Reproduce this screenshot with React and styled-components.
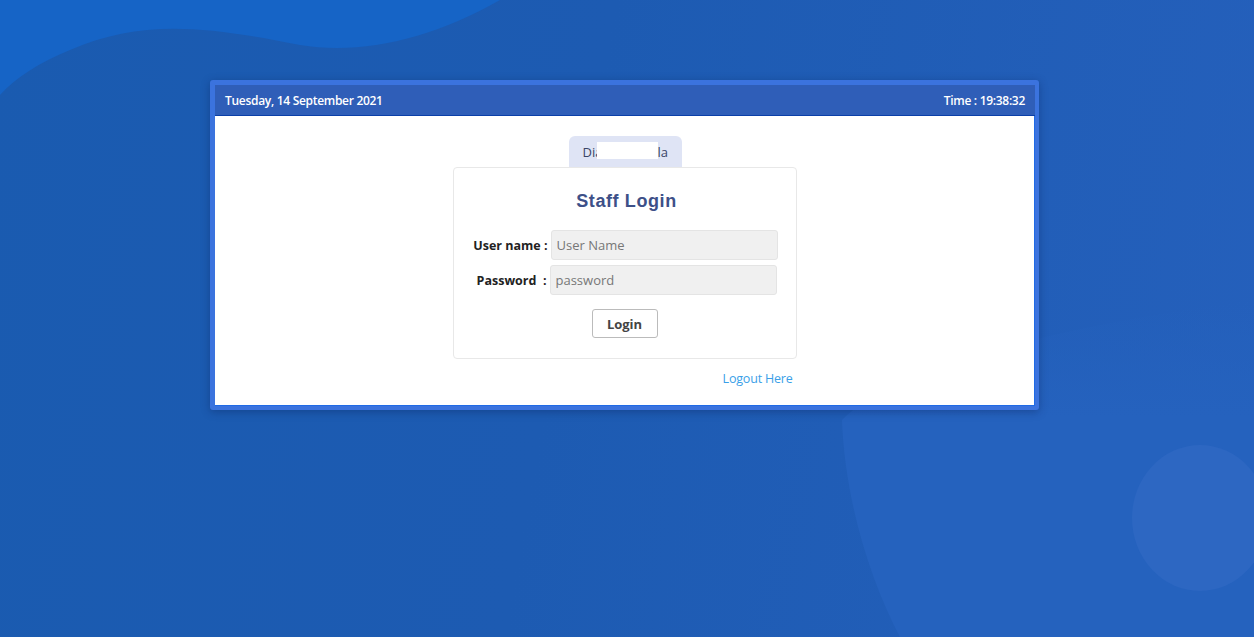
import React from 'react';
import styled, { createGlobalStyle } from 'styled-components';

const Global = createGlobalStyle`
  html, body { margin: 0; padding: 0; }
  body {
    font-family: "Open Sans", "Noto Sans", sans-serif;
    background: #1d5ab0;
  }
`;

const Page = styled.div`
  position: relative;
  width: 100%;
  height: 637px;
  overflow: hidden;
  background: linear-gradient(100deg, #1a5bb0 0%, #1d5bb2 45%, #2560bc 100%);
  padding-top: 80px;
  box-sizing: border-box;
`;

const Backdrop = styled.svg`
  position: absolute;
  inset: 0;
  width: 100%;
  height: 100%;
  pointer-events: none;
`;

const Frame = styled.div`
  position: relative;
  width: 820px;
  margin: 0 0 0 210px;
  background: #3b73de;
  padding: 5px 4px 4px 5px;
  border-radius: 3px;
  box-shadow: 0 2px 8px rgba(10, 30, 80, 0.35);
`;

const TitleBar = styled.div`
  display: flex;
  justify-content: space-between;
  align-items: center;
  height: 30px;
  padding: 0 10px;
  background: #2f5eb8;
  border-bottom: 1px solid #0b3fa8;
  color: #ffffff;
  font-size: 12px;
  font-weight: 600;
  letter-spacing: -0.3px;
`;

const Body = styled.div`
  background: #ffffff;
  height: 290px;
  display: flex;
  flex-direction: column;
  align-items: center;
  padding-top: 20px;
  box-sizing: border-box;
  border-right: 1px solid #1f6ae6;
  border-bottom: 1px solid #1f6ae6;
`;

const Tab = styled.div`
  position: relative;
  width: 113px;
  height: 31px;
  margin-left: 1px;
  background: #dfe4f5;
  border-radius: 6px 6px 0 0;
  color: #3a4466;
  font-size: 13px;
  display: flex;
  align-items: center;
  padding-left: 14px;
  box-sizing: border-box;
`;

const Mask = styled.span`
  position: absolute;
  left: 28px;
  top: 6px;
  width: 61px;
  height: 17px;
  background: #ffffff;
`;

const TabTail = styled.span`
  position: absolute;
  left: 89px;
`;

const Card = styled.div`
  width: 344px;
  height: 192px;
  border: 1px solid #e8e8e8;
  border-radius: 4px;
  box-sizing: border-box;
  display: flex;
  flex-direction: column;
  align-items: center;
  padding-top: 23px;
`;

const Heading = styled.h2`
  margin: 0 0 18px 4px;
  font-family: "Liberation Sans", sans-serif;
  font-size: 18px;
  font-weight: bold;
  color: #3d5088;
  letter-spacing: 0.6px;
`;

const Row = styled.div`
  display: flex;
  align-items: center;
  margin-bottom: 5px;
  margin-left: ${p => p.$shift || 0}px;
`;

const Label = styled.label`
  width: 76px;
  text-align: right;
  padding-right: 3px;
  font-size: 12.5px;
  font-weight: bold;
  color: #222;
  white-space: pre;
`;

const Input = styled.input`
  width: 227px;
  height: 30px;
  box-sizing: border-box;
  background: #f0f0f0;
  border: 1px solid #e4e4e4;
  border-radius: 3px;
  padding: 0 5px;
  font-family: "Open Sans", sans-serif;
  font-size: 13px;
  color: #555;
  &::placeholder { color: #777; }
`;

const Button = styled.button`
  margin-top: 9px;
  width: 66px;
  height: 29px;
  background: #ffffff;
  border: 1px solid #bbbbbb;
  border-radius: 3px;
  font-family: "Open Sans", sans-serif;
  font-size: 13px;
  font-weight: bold;
  color: #444;
`;

const LinkRow = styled.div`
  width: 344px;
  text-align: right;
  margin-top: 7px;
  padding-right: 4px;
  box-sizing: border-box;
`;

const Logout = styled.a`
  color: #3a9fe8;
  font-size: 12.5px;
  text-decoration: none;
  letter-spacing: -0.2px;
`;

export default function App() {
  return (
    <Page>
      <Global />
      <Backdrop viewBox="0 0 1254 637" preserveAspectRatio="none">
        <defs>
          <linearGradient id="fade" x1="0" y1="0" x2="0" y2="1">
            <stop offset="0" stopColor="#2562be" stopOpacity="0" />
            <stop offset="0.35" stopColor="#2562be" stopOpacity="1" />
          </linearGradient>
        </defs>
        <path d="M0 0 H500 C430 40 360 55 300 45 C200 25 140 20 70 50 C40 62 15 78 0 95 Z" fill="#1664c6" />
        <path d="M1254 300 V637 H900 C870 580 845 500 842 420 C900 360 1100 320 1254 300 Z" fill="url(#fade)" />
        <ellipse cx="1200" cy="518" rx="68" ry="73" fill="#2d67c2" />
      </Backdrop>
      <Frame>
        <TitleBar>
          <span>Tuesday, 14 September 2021</span>
          <span>Time : 19:38:32</span>
        </TitleBar>
        <Body>
          <Tab>
            Dia
            <Mask />
            <TabTail>la</TabTail>
          </Tab>
          <Card>
            <Heading>Staff Login</Heading>
            <Row $shift={0}>
              <Label>User name :</Label>
              <Input placeholder="User Name" />
            </Row>
            <Row $shift={-2}>
              <Label>Password  :</Label>
              <Input type="password" placeholder="password" />
            </Row>
            <Button>Login</Button>
          </Card>
          <LinkRow>
            <Logout href="#">Logout Here</Logout>
          </LinkRow>
        </Body>
      </Frame>
    </Page>
  );
}
